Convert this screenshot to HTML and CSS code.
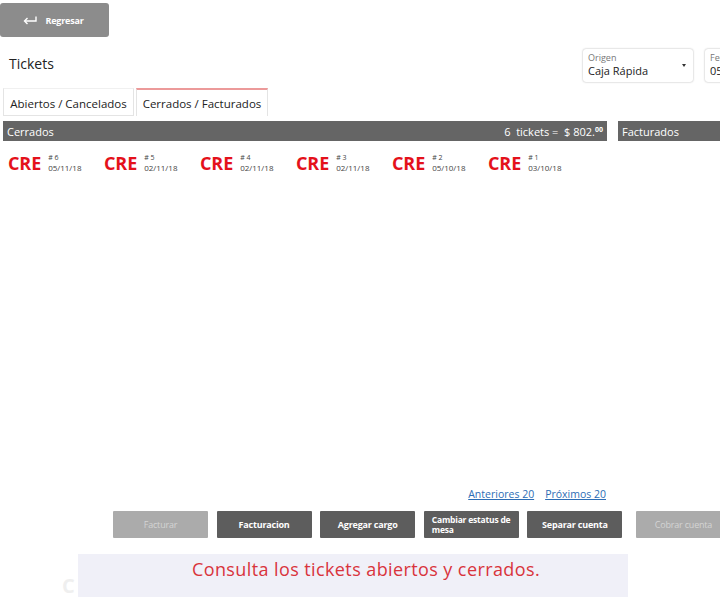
FILE: index.html
```html
<!DOCTYPE html>
<html lang="es">
<head>
<meta charset="utf-8">
<title>Tickets</title>
<link rel="stylesheet" href="styles.css">
</head>
<body>
<div class="page">
  <div class="topbar">
    <button class="back-btn">
      <svg class="back-icon" width="14" height="9" viewBox="0 0 14 9"><path d="M13 0.5 V5 H2" fill="none" stroke="#fff" stroke-width="1.4"/><path d="M4.5 2 L1.5 5 L4.5 8" fill="none" stroke="#fff" stroke-width="1.4"/></svg>
      <span>Regresar</span>
    </button>
  </div>

  <div class="header">
    <div class="title">Tickets</div>
    <div class="field">
      <div class="field-label">Origen</div>
      <div class="field-value">Caja Rápida</div>
      <span class="caret"></span>
    </div>
    <div class="field">
      <div class="field-label">Fecha</div>
      <div class="field-value">05/11/18</div>
    </div>
  </div>

  <div class="tabs">
    <div class="tab">Abiertos / Cancelados</div>
    <div class="tab active">Cerrados / Facturados</div>
  </div>

  <div class="panels">
    <div class="panel left">
      <div class="bar">
        <span>Cerrados</span>
        <span class="total">6 &nbsp;tickets = &nbsp;$ 802.<sup>00</sup></span>
      </div>
      <div class="tickets">
        <div class="ticket"><span class="code">CRE</span><span class="meta"><span class="num"># 6</span><span class="date">05/11/18</span></span></div>
        <div class="ticket"><span class="code">CRE</span><span class="meta"><span class="num"># 5</span><span class="date">02/11/18</span></span></div>
        <div class="ticket"><span class="code">CRE</span><span class="meta"><span class="num"># 4</span><span class="date">02/11/18</span></span></div>
        <div class="ticket"><span class="code">CRE</span><span class="meta"><span class="num"># 3</span><span class="date">02/11/18</span></span></div>
        <div class="ticket"><span class="code">CRE</span><span class="meta"><span class="num"># 2</span><span class="date">05/10/18</span></span></div>
        <div class="ticket"><span class="code">CRE</span><span class="meta"><span class="num"># 1</span><span class="date">03/10/18</span></span></div>
      </div>
      <div class="pager">
        <a href="#">Anteriores 20</a>
        <a href="#">Próximos 20</a>
      </div>
    </div>
    <div class="panel right">
      <div class="bar"><span>Facturados</span></div>
    </div>
  </div>

  <div class="actions">
    <button class="act disabled">Facturar</button>
    <button class="act">Facturacion</button>
    <button class="act">Agregar cargo</button>
    <button class="act two">Cambiar estatus de<br>mesa</button>
    <button class="act">Separar cuenta</button>
    <button class="act disabled wide">Cobrar cuenta</button>
  </div>

  <div class="footer">
    <span class="ghost">C</span>
    <div class="banner">Consulta los tickets abiertos y cerrados.</div>
  </div>
</div>
</body>
</html>
```
FILE: styles.css
```css
html, body {
  margin: 0;
  padding: 0;
  background: #fff;
  overflow: hidden;
}
body {
  font-family: "Open Sans", "Noto Sans", sans-serif;
  color: #222;
}
.page {
  width: 820px;
  height: 605px;
  position: relative;
}
button {
  font-family: inherit;
  border: none;
  cursor: pointer;
}
.topbar {
  padding-top: 3px;
}
.back-btn {
  width: 109px;
  height: 34px;
  background: #8c8c8c;
  border-radius: 3px;
  color: #fff;
  display: flex;
  align-items: center;
  justify-content: center;
  gap: 8px;
  font-size: 9px;
  font-weight: 700;
  padding: 0 2px 0 0;
  letter-spacing: -0.2px;
}
.back-icon {
  display: block;
}
.header {
  display: grid;
  grid-template-columns: 562px 110px 110px;
  column-gap: 12px;
  align-items: center;
  padding-left: 9px;
  margin-top: 12px;
  height: 33px;
}
.title {
  font-size: 14px;
  color: #222;
  margin-top: -4px;
}
.field {
  height: 33px;
  box-sizing: border-box;
  background: #fff;
  border-radius: 3px;
  box-shadow: 0 0 2px rgba(0,0,0,0.35);
  padding: 3px 5px 0 5px;
  position: relative;
}
.field-label {
  font-size: 9px;
  color: #777;
  line-height: 11px;
}
.field-value {
  font-size: 11px;
  color: #222;
  line-height: 16px;
}
.caret {
  position: absolute;
  right: 7px;
  top: 15px;
  width: 0;
  height: 0;
  border-left: 2px solid transparent;
  border-right: 2px solid transparent;
  border-top: 3px solid #333;
}
.tabs {
  display: flex;
  margin-top: 6px;
  padding-left: 3px;
  gap: 2px;
  width: 604px;
}
.tab {
  width: 131px;
  height: 28px;
  box-sizing: border-box;
  display: flex;
  align-items: center;
  justify-content: center;
  font-size: 11.5px;
  color: #222;
  border: 1px solid #e4e4e4;
  border-top-color: #f0f0f0;
  padding-top: 2px;
}
.tab.active {
  width: 132px;
  border-top: 2px solid #ec9a9a;
  border-bottom: none;
  padding-top: 1px;
}
.panels {
  display: flex;
  margin-top: 5px;
  padding-left: 3px;
  gap: 11px;
}
.panel.left {
  width: 604px;
  display: flex;
  flex-direction: column;
}
.panel.right {
  width: 200px;
}
.bar {
  height: 20px;
  background: #656565;
  color: #fff;
  font-size: 11px;
  display: flex;
  align-items: center;
  justify-content: space-between;
  padding: 0 4px 0 4px;
}
.total sup {
  font-size: 7px;
  font-weight: 700;
  vertical-align: 4px;
}
.tickets {
  display: flex;
  padding-left: 5px;
  margin-top: 11px;
  height: 335px;
}
.ticket {
  width: 96px;
  display: flex;
  align-items: flex-start;
  gap: 7px;
  height: 24px;
}
.code {
  color: #e4111b;
  font-weight: 700;
  font-size: 18px;
  line-height: 22px;
  letter-spacing: -0.1px;
}
.meta {
  display: flex;
  flex-direction: column;
  padding-top: 2px;
}
.num {
  font-size: 7px;
  line-height: 8px;
  color: #444;
}
.date {
  font-size: 8px;
  line-height: 11px;
  color: #444;
}
.pager {
  display: flex;
  justify-content: flex-end;
  gap: 11px;
  font-size: 10.5px;
  padding-right: 1px;
}
.pager a {
  color: #2d6db5;
  text-decoration: underline;
}
.actions {
  display: flex;
  gap: 8.6px;
  padding-left: 113px;
  margin-top: 10px;
}
.act {
  width: 95px;
  height: 27px;
  background: #5d5d5d;
  color: #fff;
  font-size: 9px;
  font-weight: 700;
  padding: 0 6px;
  letter-spacing: -0.2px;
  border-radius: 1px;
  line-height: 10px;
}
.act.two {
  text-align: left;
  font-size: 8.5px;
  padding: 0 4px 0 8px;
  white-space: nowrap;
}
.act.disabled {
  background: #ababab;
  color: #d4d4d4;
  font-weight: 400;
}
.act.wide {
  margin-left: 5px;
}
.footer {
  display: flex;
  align-items: flex-end;
  margin-top: 16px;
  height: 43px;
  padding-left: 62px;
}
.ghost {
  font-size: 20px;
  font-weight: 700;
  color: #efefef;
  width: 16px;
  line-height: 22px;
  margin-bottom: 0;
}
.banner {
  width: 550px;
  height: 43px;
  background: #f0f0f8;
  color: #d9343c;
  font-size: 18px;
  letter-spacing: 0.4px;
  text-align: center;
  padding: 3px 0 0 26px;
  box-sizing: border-box;
}
```
